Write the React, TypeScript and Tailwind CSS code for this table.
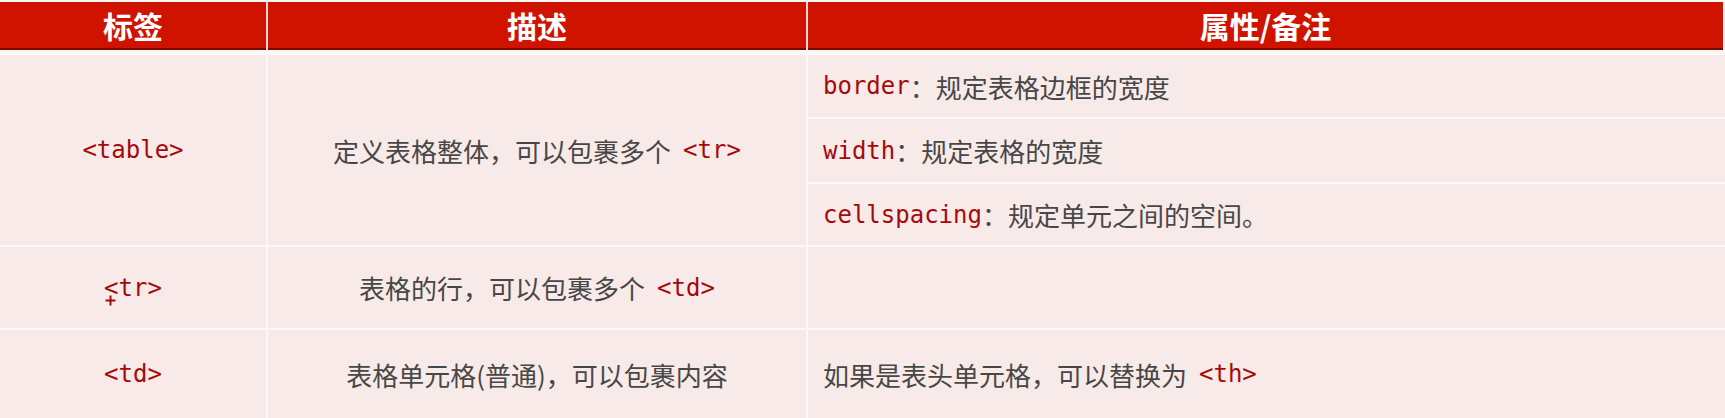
import React from "react";

const cjk = "font-['Noto_Sans_CJK_SC','Noto_Sans',sans-serif]";
const mono = "font-['DejaVu_Sans_Mono','Noto_Sans_CJK_SC',monospace]";

function Code({ children }: { children: React.ReactNode }) {
  return <span className={`${mono} text-[#a50a0a] text-[24px]`}>{children}</span>;
}

function Txt({ children }: { children: React.ReactNode }) {
  return <span className={`${cjk} text-[#474747] text-[26px]`}>{children}</span>;
}

export default function App() {
  return (
    <div className="w-[1725px] h-[418px] bg-[#fcf6f5] overflow-hidden">
      <div className="pt-[2px] pr-[2px]">
        {/* header */}
        <div className="grid grid-cols-[266px_538px_915px] gap-x-[2px] bg-[#f3d6d0] h-[48px]">
          {["标签", "描述", "属性/备注"].map((h) => (
            <div
              key={h}
              className={`${cjk} bg-[#cf1300] border-b-2 border-[#7a0a00] flex items-center justify-center text-white font-bold text-[30px] leading-none`}
            >
              {h}
            </div>
          ))}
        </div>
      </div>
      {/* body */}
      <div className="mt-[5px] grid grid-cols-[266px_538px_919px] gap-x-[2px] gap-y-[2px] bg-[#fdf9f8]">
        {/* row 1 */}
        <div className="h-[190px] bg-[#f8eae9] flex items-center justify-center">
          <Code>&lt;table&gt;</Code>
        </div>
        <div className="h-[190px] bg-[#f8eae9] flex items-center justify-center gap-[12px]">
          <Txt>定义表格整体，可以包裹多个</Txt>
          <Code>&lt;tr&gt;</Code>
        </div>
        <div className="h-[190px] flex flex-col gap-[2px]">
          <div className="h-[62px] bg-[#f8eae9] flex items-center pl-[15px]">
            <Code>border</Code>
            <Txt>：规定表格边框的宽度</Txt>
          </div>
          <div className="h-[63px] bg-[#f8eae9] flex items-center pl-[15px]">
            <Code>width</Code>
            <Txt>：规定表格的宽度</Txt>
          </div>
          <div className="h-[61px] bg-[#f8eae9] flex items-center pl-[15px]">
            <Code>cellspacing</Code>
            <Txt>：规定单元之间的空间。</Txt>
          </div>
        </div>
        {/* row 2 */}
        <div className="h-[81px] bg-[#f8eae9] flex items-center justify-center">
          <span className="relative">
            <Code>&lt;tr&gt;</Code>
            <svg
              className="absolute left-[1px] top-[25px]"
              width="11"
              height="11"
              viewBox="0 0 11 11"
            >
              <path d="M5.5 0.5V10.5M0.5 5.5H10.5" stroke="#a50a0a" strokeWidth="2" />
            </svg>
          </span>
        </div>
        <div className="h-[81px] bg-[#f8eae9] flex items-center justify-center gap-[12px]">
          <Txt>表格的行，可以包裹多个</Txt>
          <Code>&lt;td&gt;</Code>
        </div>
        <div className="h-[81px] bg-[#f8eae9]" />
        {/* row 3 */}
        <div className="h-[88px] bg-[#f8eae9] flex items-center justify-center">
          <Code>&lt;td&gt;</Code>
        </div>
        <div className="h-[88px] bg-[#f8eae9] flex items-center justify-center">
          <Txt>表格单元格(普通)，可以包裹内容</Txt>
        </div>
        <div className="h-[88px] bg-[#f8eae9] flex items-center pl-[15px] gap-[12px]">
          <Txt>如果是表头单元格，可以替换为</Txt>
          <Code>&lt;th&gt;</Code>
        </div>
      </div>
    </div>
  );
}
